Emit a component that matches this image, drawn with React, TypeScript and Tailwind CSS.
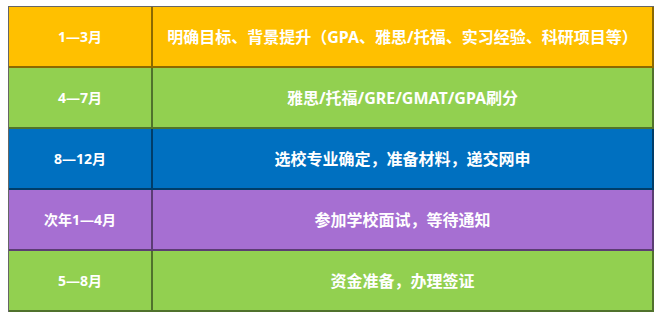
const rows = [
  { time: '1—3月', task: '明确目标、背景提升（GPA、雅思/托福、实习经验、科研项目等）', bg: 'bg-[#ffc000]' },
  { time: '4—7月', task: '雅思/托福/GRE/GMAT/GPA刷分', bg: 'bg-[#92d050]' },
  { time: '8—12月', task: '选校专业确定，准备材料，递交网申', bg: 'bg-[#0070c0]' },
  { time: '次年1—4月', task: '参加学校面试，等待通知', bg: 'bg-[#a66fd2]' },
  { time: '5—8月', task: '资金准备，办理签证', bg: 'bg-[#92d050]' },
];

export default function App() {
  return (
    <div className="h-[314px] w-[660px] bg-white pl-[8px] pt-[6px] font-['Noto_Sans','Noto_Sans_CJK_SC',sans-serif] font-bold text-white">
      <div className="flex w-[646px] flex-col border-l border-t border-black/60">
        {rows.map((row) => (
          <div key={row.time} className={`grid h-[61px] grid-cols-[144px_1fr] ${row.bg}`}>
            <div className="flex items-center justify-center border-b-2 border-r-2 border-black/45 text-[14px]">{row.time}</div>
            <div className="flex items-center justify-center border-b-2 border-r-2 border-black/45 text-[16px]">{row.task}</div>
          </div>
        ))}
      </div>
    </div>
  );
}
